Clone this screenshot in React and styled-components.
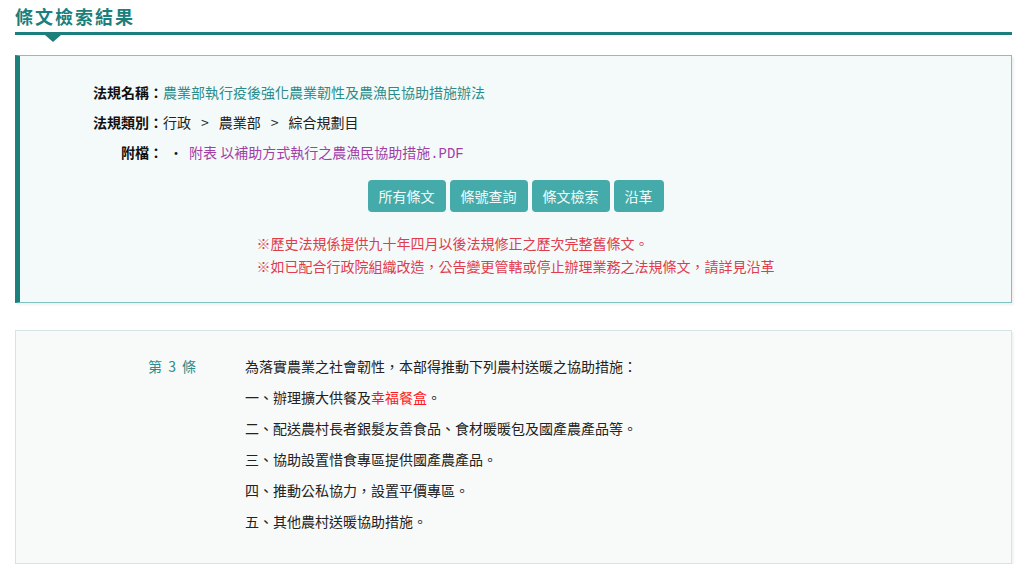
import React from "react";
import styled, { createGlobalStyle } from "styled-components";

const teal = "#1b7f7c";
const tealText = "#2b8c8a";
const btnTeal = "#45abaa";
const red = "#e03c4e";

const GlobalStyle = createGlobalStyle`
  body {
    margin: 0;
    background: #fff;
    font-family: "Noto Sans CJK TC", "Liberation Sans", sans-serif;
    font-size: 14px;
    color: #222;
  }
`;

const Page = styled.div`padding: 0 12px 0 15px;`;

const Heading = styled.div`
  position: relative;
  border-bottom: 3px solid ${teal};
  height: 32px;
  &::after {
    content: "";
    position: absolute;
    left: 30px;
    bottom: -10px;
    border-left: 8px solid transparent;
    border-right: 8px solid transparent;
    border-top: 7px solid ${teal};
  }
`;

const HeadTitle = styled.h2`
  margin: 0;
  font-size: 18px;
  line-height: 32px;
  font-weight: 700;
  letter-spacing: 2px;
  color: ${teal};
`;

const InfoBox = styled.section`
  margin-top: 20px;
  background: #f4fafa;
  border: 1px solid #80c2bf;
  border-left: 5px solid ${teal};
  box-shadow: 2px 2px 2px rgba(0, 0, 0, 0.06);
  padding: 21px 0 24px 63px;
`;

const InfoRow = styled.div`
  display: grid;
  grid-template-columns: 80px 1fr;
  line-height: 30px;
`;

const Label = styled.span`
  text-align: right;
  font-weight: 700;
  color: #111;
`;

const Value = styled.span`color: ${(p) => p.$color || "#222"};`;

const Sep = styled.span`padding: 0 10px;`;

const Bullet = styled.span`margin: 0 6px 0 6px;color: #222;`;

const FileLink = styled.a`
  color: #a23ea6;
  text-decoration: none;
`;

const Mono = styled.span`font-family: "Liberation Mono", monospace;`;

const ButtonBar = styled.div`
  display: flex;
  justify-content: center;
  gap: 4px;
  margin: 11px 0 0 -63px;
`;

const Button = styled.button`
  height: 32px;
  padding: 0 11px;
  border: none;
  border-radius: 4px;
  background: ${btnTeal};
  color: #f2fbfb;
  font-family: inherit;
  font-size: 14px;
  cursor: pointer;
`;

const NoteWrap = styled.div`
  display: flex;
  justify-content: center;
  margin: 20px 0 0 -63px;
`;

const Notes = styled.div`
  color: ${red};
  line-height: 23px;
`;

const ArticleBox = styled.section`
  margin-top: 27px;
  background: #f8fafa;
  border: 1px solid #d6e4e4;
  box-shadow: 2px 2px 2px rgba(0, 0, 0, 0.05);
  padding: 20px 0 26px 132px;
  display: grid;
  grid-template-columns: 97px 1fr;
  line-height: 31px;
`;

const ArtNo = styled.div`
  color: ${tealText};
  word-spacing: 3px;
`;

const ArtLine = styled.div`color: #222;`;

const Highlight = styled.span`color: #ff1a1a;`;

export default function App() {
  return (
    <Page>
      <GlobalStyle />
      <Heading>
        <HeadTitle>條文檢索結果</HeadTitle>
      </Heading>

      <InfoBox>
        <InfoRow>
          <Label>法規名稱：</Label>
          <Value $color={tealText}>農業部執行疫後強化農業韌性及農漁民協助措施辦法</Value>
        </InfoRow>
        <InfoRow>
          <Label>法規類別：</Label>
          <Value>
            行政<Sep>&gt;</Sep>農業部<Sep>&gt;</Sep>綜合規劃目
          </Value>
        </InfoRow>
        <InfoRow>
          <Label>附檔：</Label>
          <Value>
            <Bullet>•</Bullet>
            <FileLink href="#">
              附表 以補助方式執行之農漁民協助措施<Mono>.PDF</Mono>
            </FileLink>
          </Value>
        </InfoRow>

        <ButtonBar>
          <Button>所有條文</Button>
          <Button>條號查詢</Button>
          <Button>條文檢索</Button>
          <Button>沿革</Button>
        </ButtonBar>

        <NoteWrap>
          <Notes>
            <div>※歷史法規係提供九十年四月以後法規修正之歷次完整舊條文。</div>
            <div>※如已配合行政院組織改造，公告變更管轄或停止辦理業務之法規條文，請詳見沿革</div>
          </Notes>
        </NoteWrap>
      </InfoBox>

      <ArticleBox>
        <ArtNo>第 3 條</ArtNo>
        <div>
          <ArtLine>為落實農業之社會韌性，本部得推動下列農村送暖之協助措施：</ArtLine>
          <ArtLine>一、辦理擴大供餐及<Highlight>幸福餐盒</Highlight>。</ArtLine>
          <ArtLine>二、配送農村長者銀髮友善食品、食材暖暖包及國產農產品等。</ArtLine>
          <ArtLine>三、協助設置惜食專區提供國產農產品。</ArtLine>
          <ArtLine>四、推動公私協力，設置平價專區。</ArtLine>
          <ArtLine>五、其他農村送暖協助措施。</ArtLine>
        </div>
      </ArticleBox>
    </Page>
  );
}
